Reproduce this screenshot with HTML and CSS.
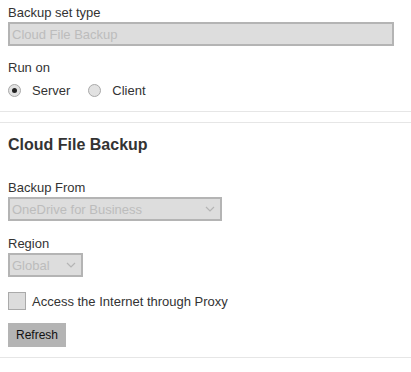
FILE: index.html
```html
<!DOCTYPE html>
<html lang="en">
<head>
  <meta charset="UTF-8">
  <title>Backup Set</title>
  <link rel="stylesheet" href="styles.css">
</head>
<body>

<div class="section first">
  <div class="field">
    <label class="label">Backup set type</label>
    <input class="text-box" type="text" value="Cloud File Backup" disabled>
  </div>

  <div class="field run-on">
    <label class="label">Run on</label>
    <div class="radio-row">
      <span class="radio checked"></span><span class="radio-text">Server</span>
      <span class="radio"></span><span class="radio-text">Client</span>
    </div>
  </div>
</div>

<div class="section second">
  <h3>Cloud File Backup</h3>

  <div class="field">
    <label class="label">Backup From</label>
    <div class="select wide">
      <span>OneDrive for Business</span>
      <svg class="chevron" width="10" height="6" viewBox="0 0 10 6"><path d="M1 1 L5 5 L9 1" fill="none" stroke="#b5b5b5" stroke-width="1.2"/></svg>
    </div>
  </div>

  <div class="field">
    <label class="label">Region</label>
    <div class="select narrow">
      <span>Global</span>
      <svg class="chevron" width="10" height="6" viewBox="0 0 10 6"><path d="M1 1 L5 5 L9 1" fill="none" stroke="#b5b5b5" stroke-width="1.2"/></svg>
    </div>
  </div>

  <div class="check-row">
    <span class="checkbox"></span>
    <span>Access the Internet through Proxy</span>
  </div>

  <div>
    <button class="refresh" type="button">Refresh</button>
  </div>
</div>

</body>
</html>
```

FILE: styles.css
```css
body {
  font-family: "Liberation Sans", Arial, sans-serif;
  font-size: 13px;
  color: #333;
  background: #fff;
  margin: 0;
  padding: 0;
}
.section {
  padding: 0 8px;
  border-bottom: 1px solid #e6e6e6;
  display: flex;
  flex-direction: column;
}
.first {
  padding-top: 5px;
  padding-bottom: 12px;
}
.second {
  margin-top: 10px;
  border-top: 1px solid #e6e6e6;
  padding-top: 12px;
  padding-bottom: 10px;
}
.field {
  display: flex;
  flex-direction: column;
  align-items: flex-start;
  margin-bottom: 14px;
}
.second .field {
  margin-bottom: 15px;
}
.run-on {
  margin-bottom: 0;
}
.label {
  line-height: 16px;
  margin-bottom: 1px;
}
.text-box {
  box-sizing: border-box;
  width: 386px;
  height: 24px;
  border: 2px solid #b4b4b4;
  background: #dddddd;
  color: #bcbcbc;
  font-family: inherit;
  font-size: 13px;
  padding: 0 2px;
  margin: 0;
}
.radio-row {
  display: flex;
  align-items: center;
  height: 18px;
  margin-top: 4px;
}
.radio {
  box-sizing: border-box;
  width: 13px;
  height: 13px;
  border: 1px solid #a9a9a9;
  border-radius: 50%;
  background: #e2e2e2;
  position: relative;
}
.radio.checked::after {
  content: "";
  position: absolute;
  left: 3px;
  top: 3px;
  width: 5px;
  height: 5px;
  border-radius: 50%;
  background: #222;
}
.radio-text {
  margin-left: 11px;
  margin-right: 18px;
  color: #333;
}
h3 {
  font-size: 16px;
  line-height: 19px;
  margin: 0 0 26px 0;
  color: #333;
}
.select {
  box-sizing: border-box;
  height: 24px;
  border: 2px solid #b4b4b4;
  background: #dddddd;
  color: #bcbcbc;
  display: flex;
  align-items: center;
  justify-content: space-between;
  padding: 0 5px 0 2px;
}
.wide {
  width: 214px;
}
.narrow {
  width: 75px;
}
.check-row {
  display: flex;
  align-items: center;
  gap: 6px;
  margin-bottom: 13px;
}
.checkbox {
  box-sizing: border-box;
  width: 18px;
  height: 18px;
  border: 1px solid #aaa;
  background: #dcdcdc;
}
.refresh {
  font-family: inherit;
  font-size: 12px;
  color: #111;
  background: #b4b4b4;
  border: none;
  height: 24px;
  width: 58px;
  padding: 0;
  margin: 0;
  border-radius: 0;
}
```
